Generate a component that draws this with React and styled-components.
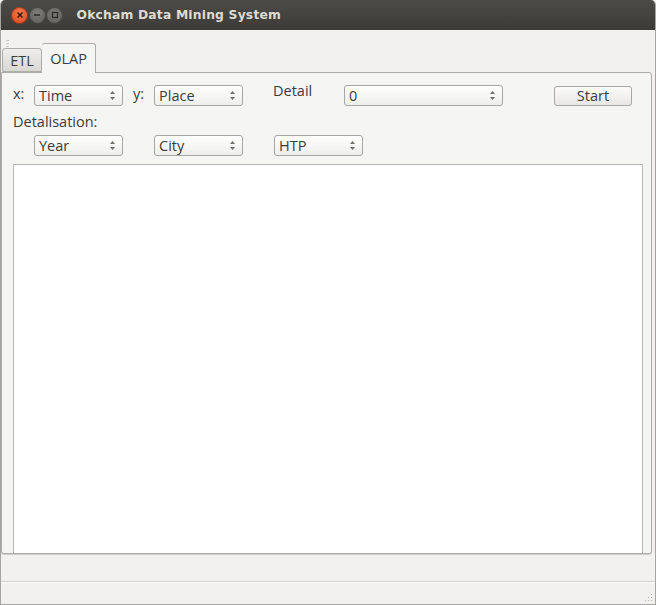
import React from "react";
import styled, { createGlobalStyle } from "styled-components";

const Global = createGlobalStyle`
  html, body { margin: 0; padding: 0; background: #f2f1f0; }
  body { font-family: "Open Sans", "DejaVu Sans", sans-serif; }
`;

const Window = styled.div`
  width: 656px;
  height: 605px;
  box-sizing: border-box;
  display: flex;
  flex-direction: column;
  background: #f2f1f0;
  border-left: 1px solid #a6a5a1;
  border-right: 1px solid #a6a5a1;
  border-bottom: 1px solid #a6a5a1;
  border-radius: 5px 5px 0 0;
  overflow: hidden;
`;

const TitleBar = styled.div`
  height: 30px;
  flex: none;
  display: flex;
  align-items: center;
  padding-left: 11px;
  background: linear-gradient(#4c4b47, #3c3b37);
  margin: 0 -1px;
`;

const WinBtn = styled.div`
  width: 17px;
  height: 17px;
  border-radius: 50%;
  margin-right: 0.5px;
  display: flex;
  align-items: center;
  justify-content: center;
  background: ${(p) =>
    p.$close
      ? "radial-gradient(circle at 50% 35%, #f47a4c, #d8431b)"
      : "radial-gradient(circle at 50% 35%, #7d7c77, #5b5a56)"};
  box-shadow: inset 0 0 0 1px rgba(0, 0, 0, 0.35);
`;

const Title = styled.div`
  margin-left: 13px;
  color: #dfdbd2;
  font-family: "DejaVu Sans", sans-serif;
  font-weight: bold;
  font-size: 12.3px;
  letter-spacing: 0.2px;
`;

const Grip = styled.div`
  height: 13px;
  flex: none;
  padding: 2px 0 0 5px;
  box-sizing: border-box;
`;

const TabBar = styled.div`
  height: 29px;
  flex: none;
  display: flex;
  align-items: flex-end;
  padding-left: 1px;
  position: relative;
  z-index: 1;
`;

const Tab = styled.div`
  box-sizing: border-box;
  height: ${(p) => (p.$active ? "30px" : "24px")};
  margin-bottom: ${(p) => (p.$active ? "-1px" : "0")};
  width: ${(p) => (p.$active ? "54px" : "40px")};
  display: flex;
  align-items: center;
  justify-content: center;
  border: 1px solid #aeada9;
  border-bottom: ${(p) => (p.$active ? "none" : "1px solid #aeada9")};
  border-left: ${(p) => (p.$active ? "none" : "1px solid #aeada9")};
  border-radius: 3px 3px 0 0;
  background: ${(p) =>
    p.$active ? "#f5f5f4" : "linear-gradient(#eeedeb, #dad8d4)"};
  color: #3c3c3c;
  font-size: 14.5px;
`;

const Pane = styled.div`
  height: 482px;
  flex: none;
  margin: 0 3px 0 0;
  box-sizing: border-box;
  border: 1px solid #aeada9;
  border-radius: 0 3px 3px 3px;
  background: #f5f5f4;
  box-shadow: 0 1px 0 #cfcdc9;
  padding: 12px 8px 0 11px;
  display: flex;
  flex-direction: column;
`;

const Row = styled.div`
  display: flex;
  align-items: center;
  height: 21px;
`;

const Label = styled.div`
  width: ${(p) => p.$w}px;
  margin-left: ${(p) => p.$ml || 0}px;
  flex: none;
  color: #3c3c3c;
  font-size: 14.5px;
  align-self: ${(p) => (p.$top ? "flex-start" : "center")};
  margin-top: ${(p) => (p.$top ? "-4px" : "-5px")};
`;

const Combo = styled.div`
  box-sizing: border-box;
  width: ${(p) => p.$w}px;
  margin-left: ${(p) => p.$ml || 0}px;
  height: 21px;
  flex: none;
  border: 1px solid #a8a6a2;
  border-radius: 3px;
  background: linear-gradient(#ffffff, #eeeeec);
  display: flex;
  align-items: center;
  padding: 0 6px 0 4px;
  color: #3c3c3c;
  font-size: 14.5px;
`;

const ComboText = styled.span`
  flex: 1;
`;

const Button = styled.div`
  box-sizing: border-box;
  width: 78px;
  height: 20px;
  margin-left: ${(p) => p.$ml}px;
  border: 1px solid #a8a6a2;
  border-radius: 3px;
  background: linear-gradient(#fbfbfa, #e8e7e4);
  display: flex;
  align-items: center;
  justify-content: center;
  color: #3c3c3c;
  font-size: 14.5px;
`;

const SubLabel = styled.div`
  margin-top: 6px;
  height: 23px;
  color: #3c3c3c;
  font-size: 14.5px;
`;

const Canvas = styled.div`
  margin-top: 8px;
  flex: 1;
  background: #ffffff;
  border: 1px solid #b8b7b3;
  border-bottom: none;
`;

const Spacer = styled.div`
  flex: 1;
`;

const StatusBar = styled.div`
  height: 20px;
  flex: none;
  border-top: 1px solid #d3d1cd;
  box-shadow: inset 0 1px 0 #fbfbfa;
  display: flex;
  justify-content: flex-end;
  align-items: flex-end;
  padding: 0 2px 2px 0;
`;

const Arrows = () => (
  <svg width="7" height="11" viewBox="0 0 7 11">
    <path d="M3.5 1 L6 4 L1 4 Z" fill="#6f6e6a" />
    <path d="M3.5 10 L6 7 L1 7 Z" fill="#6f6e6a" />
  </svg>
);

const ComboBox = ({ value, w, ml }) => (
  <Combo $w={w} $ml={ml}>
    <ComboText>{value}</ComboText>
    <Arrows />
  </Combo>
);

export default function App() {
  return (
    <>
      <Global />
      <Window>
        <TitleBar>
          <WinBtn $close>
            <svg width="8" height="8" viewBox="0 0 8 8">
              <path d="M1.5 1.5 L6.5 6.5 M6.5 1.5 L1.5 6.5" stroke="#3a1a10" strokeWidth="1.6" />
            </svg>
          </WinBtn>
          <WinBtn>
            <svg width="8" height="8" viewBox="0 0 8 8">
              <path d="M1 4 L7 4" stroke="#2e2d2a" strokeWidth="1.6" />
            </svg>
          </WinBtn>
          <WinBtn>
            <svg width="8" height="8" viewBox="0 0 8 8">
              <rect x="1.5" y="1.5" width="5" height="5" fill="none" stroke="#2e2d2a" strokeWidth="1.3" />
            </svg>
          </WinBtn>
          <Title>Okcham Data Mining System</Title>
        </TitleBar>
        <Grip>
          <svg width="3" height="9" viewBox="0 0 3 9">
            <rect x="0" y="0" width="3" height="1" fill="#c9c7c3" />
            <rect x="0" y="3" width="3" height="1" fill="#c9c7c3" />
            <rect x="0" y="6" width="3" height="1" fill="#c9c7c3" />
          </svg>
        </Grip>
        <TabBar>
          <Tab>ETL</Tab>
          <Tab $active>OLAP</Tab>
        </TabBar>
        <Pane>
          <Row>
            <Label $w={21}>x:</Label>
            <ComboBox value="Time" w={89} />
            <Label $w={21} $ml={10}>y:</Label>
            <ComboBox value="Place" w={89} />
            <Label $w={71} $ml={30} $top>Detail</Label>
            <ComboBox value="0" w={159} />
            <Button $ml={51}>Start</Button>
          </Row>
          <SubLabel>Detalisation:</SubLabel>
          <Row>
            <ComboBox value="Year" w={89} ml={21} />
            <ComboBox value="City" w={89} ml={31} />
            <ComboBox value="HTP" w={89} ml={31} />
          </Row>
          <Canvas />
        </Pane>
        <Spacer />
        <StatusBar>
          <svg width="10" height="10" viewBox="0 0 10 10">
            {[[8, 2], [8, 5], [5, 5], [8, 8], [5, 8], [2, 8]].map(([x, y], i) => (
              <rect key={i} x={x} y={y} width="1" height="1" fill="#b5b3af" />
            ))}
          </svg>
        </StatusBar>
      </Window>
    </>
  );
}
